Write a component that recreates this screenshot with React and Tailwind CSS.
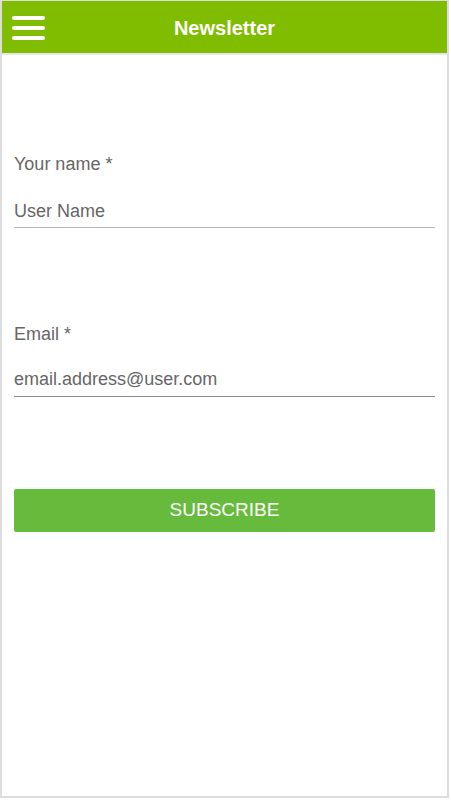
export default function App() {
  return (
    <div className="w-[451px] h-[800px] bg-white font-['Liberation_Sans',Arial,sans-serif]">
      <div className="w-[449px] h-[798px] border-x-2 border-t border-b-2 border-[#dddddd] flex flex-col">
        {/* Header */}
        <div className="h-[54px] bg-[#80bc00] flex items-center relative border-b-2 border-[#e6e6e6] shrink-0">
          <button className="absolute left-[10px] top-[15px] flex flex-col gap-[6px]">
            <span className="block w-[33px] h-[4px] rounded-full bg-white" />
            <span className="block w-[33px] h-[4px] rounded-full bg-white" />
            <span className="block w-[33px] h-[4px] rounded-full bg-white" />
          </button>
          <h1 className="flex-1 pt-[2px] text-center text-white font-bold text-[20px] leading-none">Newsletter</h1>
        </div>

        {/* Form */}
        <div className="px-3 pt-[99px]">
          <label className="block text-[18px] text-[#666666] leading-5">Your name *</label>
          <div className="mt-[27px] pb-[6px] border-b border-[#bbbbbb] text-[18px] text-[#666666] leading-5">User Name</div>

          <label className="block mt-[96px] text-[18px] text-[#666666] leading-5">Email *</label>
          <div className="mt-[25px] pb-[7px] border-b border-[#8a8a8a] text-[18px] text-[#666666] leading-5">email.address@user.com</div>

          <button className="mt-[92px] w-full h-[43px] rounded-[2px] bg-[#66bb3c] text-white text-[19px] flex items-center justify-center">
            SUBSCRIBE
          </button>
        </div>
      </div>
    </div>
  );
}
